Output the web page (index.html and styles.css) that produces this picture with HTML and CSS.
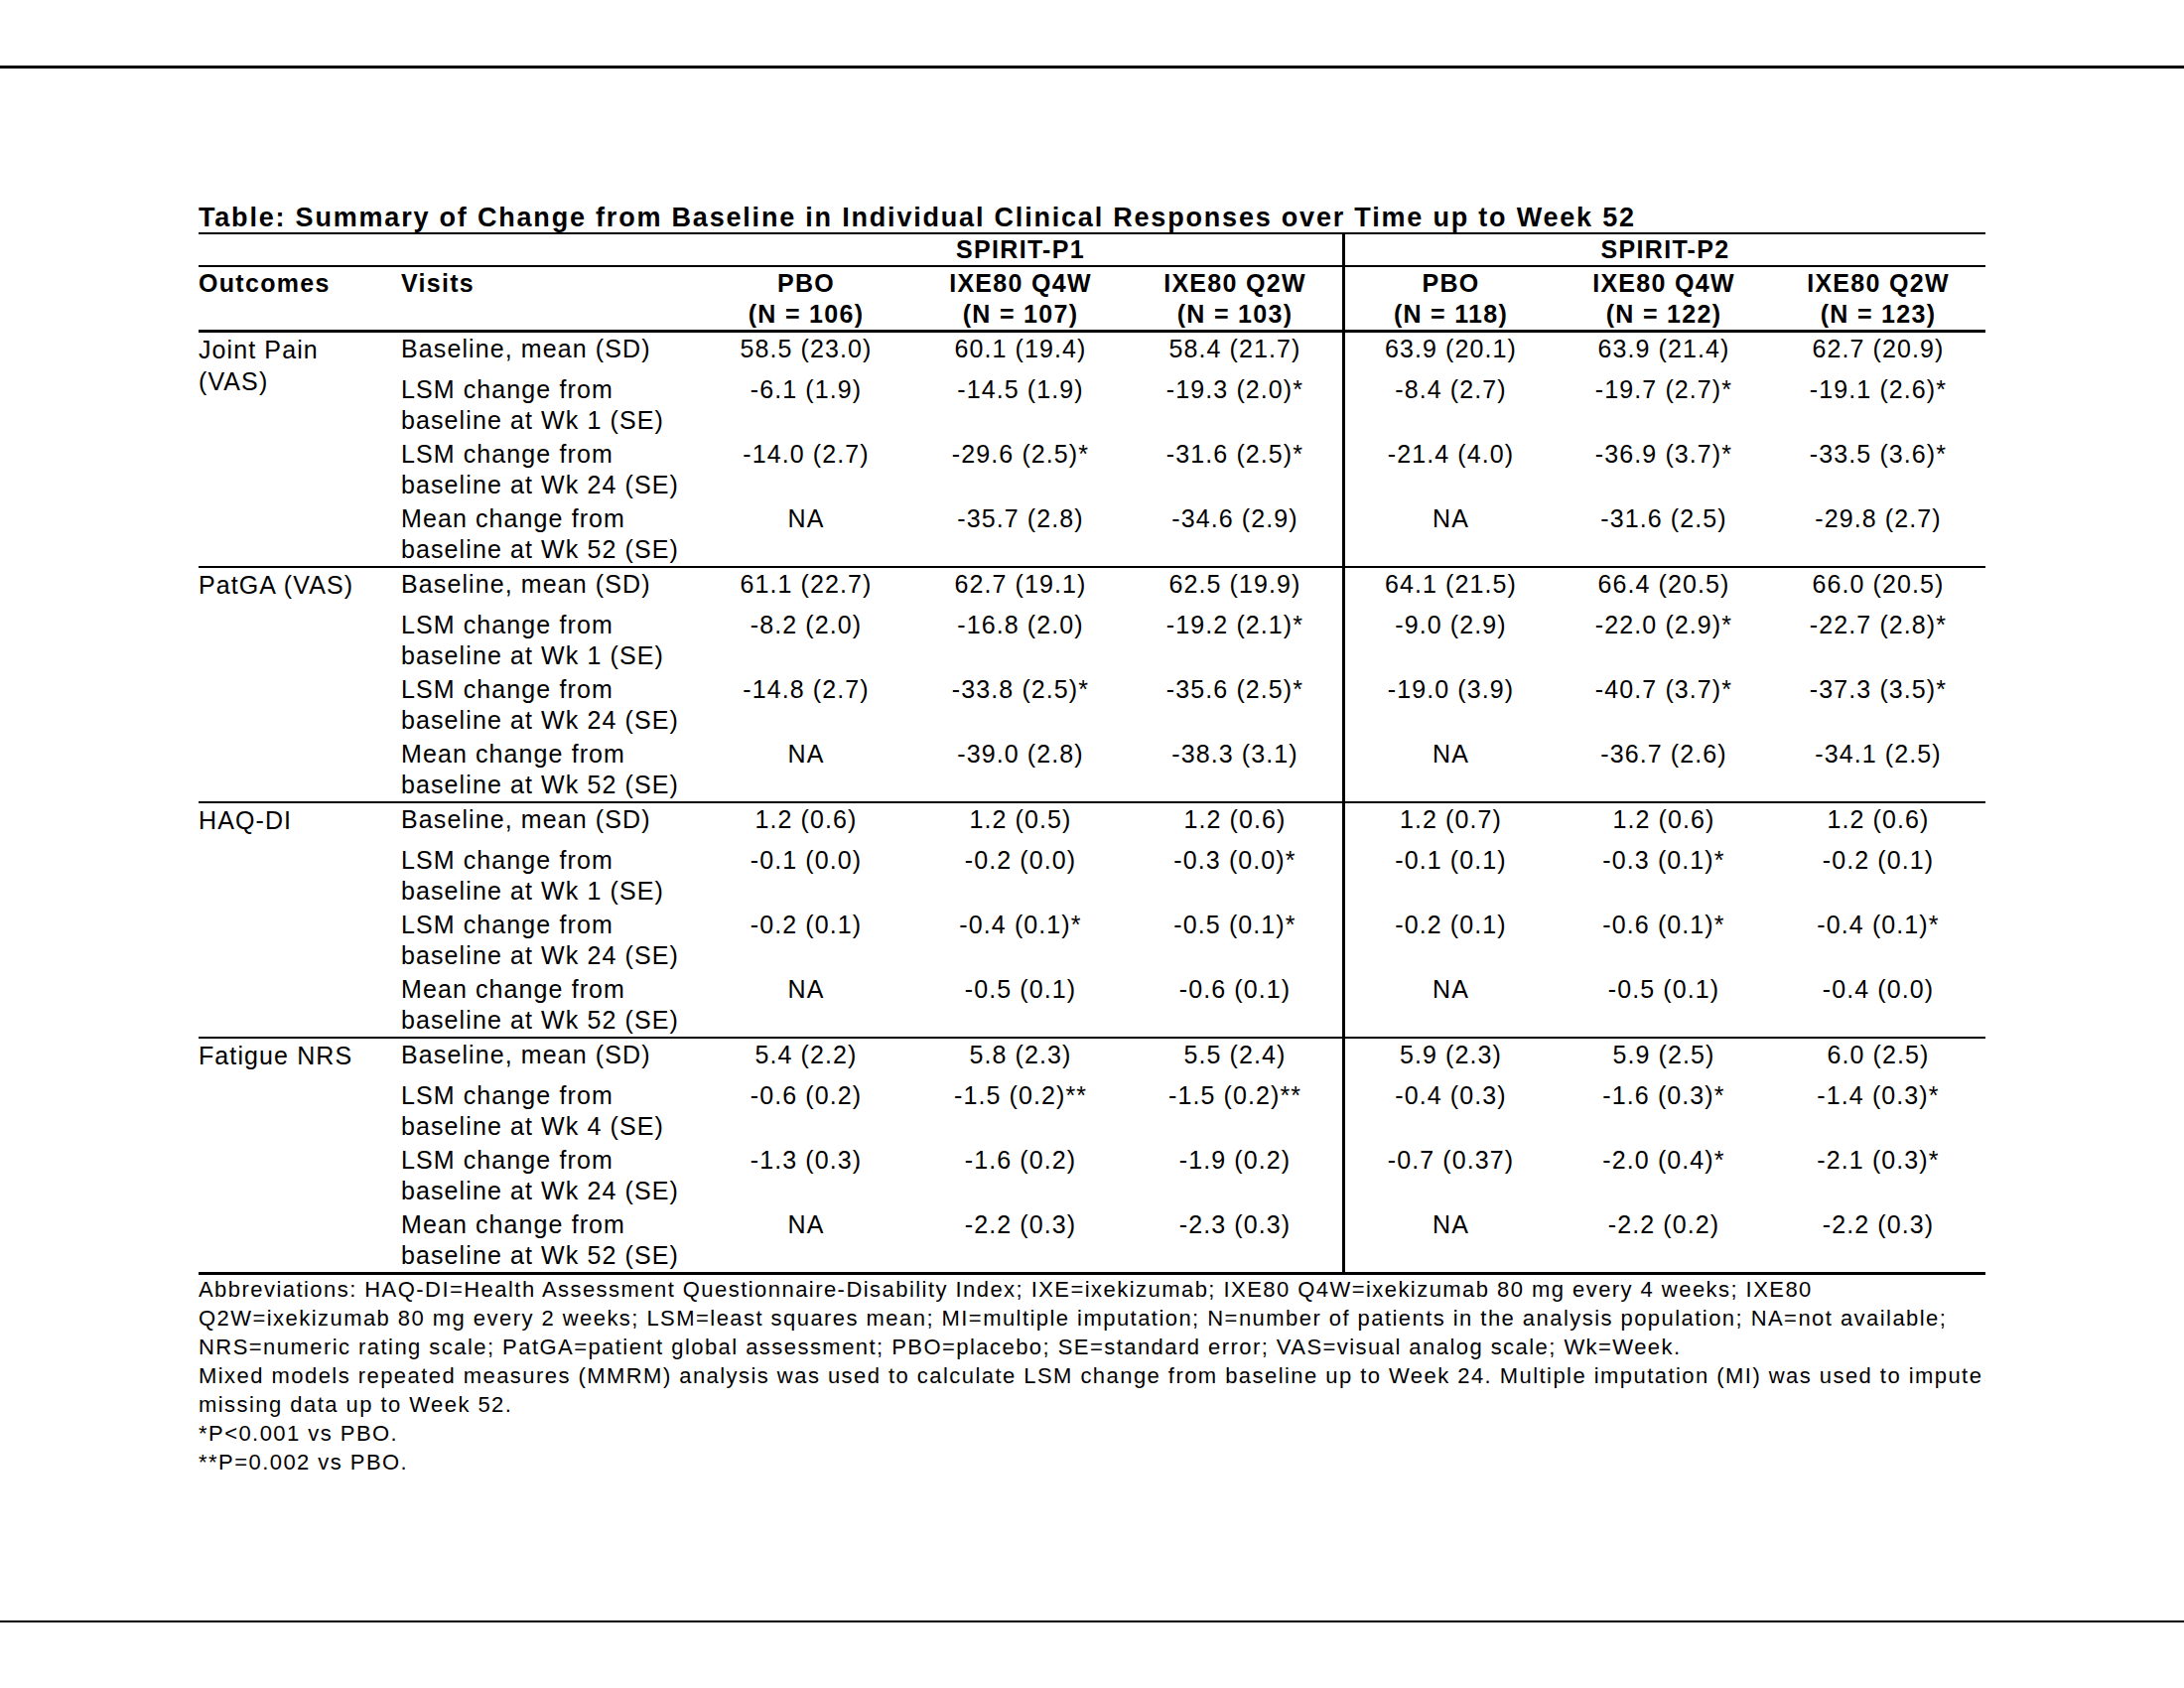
FILE: index.html
```html
<!DOCTYPE html>
<html lang="en">
<head>
<meta charset="utf-8">
<title>Summary of Change from Baseline</title>
<link rel="stylesheet" href="styles.css">
</head>
<body>
<div class="sheet">
  <div class="rule-top"></div>
  <div class="content">
    <div class="title">Table: Summary of Change from Baseline in Individual Clinical Responses over Time up to Week 52</div>
    <table class="data">
      <colgroup>
        <col class="c-out"><col class="c-vis">
        <col class="c-val"><col class="c-val"><col class="c-val">
        <col class="c-val"><col class="c-val"><col class="c-val">
      </colgroup>
      <thead>
        <tr class="study-row">
          <th></th><th></th>
          <th colspan="3">SPIRIT-P1</th>
          <th colspan="3" class="p2">SPIRIT-P2</th>
        </tr>
        <tr class="arm-row">
          <th class="left">Outcomes</th>
          <th class="left">Visits</th>
          <th>PBO<br>(N = 106)</th>
          <th>IXE80 Q4W<br>(N = 107)</th>
          <th>IXE80 Q2W<br>(N = 103)</th>
          <th class="p2">PBO<br>(N = 118)</th>
          <th>IXE80 Q4W<br>(N = 122)</th>
          <th>IXE80 Q2W<br>(N = 123)</th>
        </tr>
      </thead>
      <tbody class="group">
        <tr class="first">
          <td class="outcome" rowspan="4">Joint Pain<br>(VAS)</td>
          <td class="visit">Baseline, mean (SD)</td>
          <td>58.5 (23.0)</td><td>60.1 (19.4)</td><td>58.4 (21.7)</td>
          <td class="p2">63.9 (20.1)</td><td>63.9 (21.4)</td><td>62.7 (20.9)</td>
        </tr>
        <tr>
          <td class="visit">LSM change from<br>baseline at Wk 1 (SE)</td>
          <td>-6.1 (1.9)</td><td>-14.5 (1.9)</td><td>-19.3 (2.0)*</td>
          <td class="p2">-8.4 (2.7)</td><td>-19.7 (2.7)*</td><td>-19.1 (2.6)*</td>
        </tr>
        <tr>
          <td class="visit">LSM change from<br>baseline at Wk 24 (SE)</td>
          <td>-14.0 (2.7)</td><td>-29.6 (2.5)*</td><td>-31.6 (2.5)*</td>
          <td class="p2">-21.4 (4.0)</td><td>-36.9 (3.7)*</td><td>-33.5 (3.6)*</td>
        </tr>
        <tr class="last">
          <td class="visit">Mean change from<br>baseline at Wk 52 (SE)</td>
          <td>NA</td><td>-35.7 (2.8)</td><td>-34.6 (2.9)</td>
          <td class="p2">NA</td><td>-31.6 (2.5)</td><td>-29.8 (2.7)</td>
        </tr>
      </tbody>
      <tbody class="group">
        <tr class="first">
          <td class="outcome" rowspan="4">PatGA (VAS)</td>
          <td class="visit">Baseline, mean (SD)</td>
          <td>61.1 (22.7)</td><td>62.7 (19.1)</td><td>62.5 (19.9)</td>
          <td class="p2">64.1 (21.5)</td><td>66.4 (20.5)</td><td>66.0 (20.5)</td>
        </tr>
        <tr>
          <td class="visit">LSM change from<br>baseline at Wk 1 (SE)</td>
          <td>-8.2 (2.0)</td><td>-16.8 (2.0)</td><td>-19.2 (2.1)*</td>
          <td class="p2">-9.0 (2.9)</td><td>-22.0 (2.9)*</td><td>-22.7 (2.8)*</td>
        </tr>
        <tr>
          <td class="visit">LSM change from<br>baseline at Wk 24 (SE)</td>
          <td>-14.8 (2.7)</td><td>-33.8 (2.5)*</td><td>-35.6 (2.5)*</td>
          <td class="p2">-19.0 (3.9)</td><td>-40.7 (3.7)*</td><td>-37.3 (3.5)*</td>
        </tr>
        <tr class="last">
          <td class="visit">Mean change from<br>baseline at Wk 52 (SE)</td>
          <td>NA</td><td>-39.0 (2.8)</td><td>-38.3 (3.1)</td>
          <td class="p2">NA</td><td>-36.7 (2.6)</td><td>-34.1 (2.5)</td>
        </tr>
      </tbody>
      <tbody class="group">
        <tr class="first">
          <td class="outcome" rowspan="4">HAQ-DI</td>
          <td class="visit">Baseline, mean (SD)</td>
          <td>1.2 (0.6)</td><td>1.2 (0.5)</td><td>1.2 (0.6)</td>
          <td class="p2">1.2 (0.7)</td><td>1.2 (0.6)</td><td>1.2 (0.6)</td>
        </tr>
        <tr>
          <td class="visit">LSM change from<br>baseline at Wk 1 (SE)</td>
          <td>-0.1 (0.0)</td><td>-0.2 (0.0)</td><td>-0.3 (0.0)*</td>
          <td class="p2">-0.1 (0.1)</td><td>-0.3 (0.1)*</td><td>-0.2 (0.1)</td>
        </tr>
        <tr>
          <td class="visit">LSM change from<br>baseline at Wk 24 (SE)</td>
          <td>-0.2 (0.1)</td><td>-0.4 (0.1)*</td><td>-0.5 (0.1)*</td>
          <td class="p2">-0.2 (0.1)</td><td>-0.6 (0.1)*</td><td>-0.4 (0.1)*</td>
        </tr>
        <tr class="last">
          <td class="visit">Mean change from<br>baseline at Wk 52 (SE)</td>
          <td>NA</td><td>-0.5 (0.1)</td><td>-0.6 (0.1)</td>
          <td class="p2">NA</td><td>-0.5 (0.1)</td><td>-0.4 (0.0)</td>
        </tr>
      </tbody>
      <tbody class="group final">
        <tr class="first">
          <td class="outcome" rowspan="4">Fatigue NRS</td>
          <td class="visit">Baseline, mean (SD)</td>
          <td>5.4 (2.2)</td><td>5.8 (2.3)</td><td>5.5 (2.4)</td>
          <td class="p2">5.9 (2.3)</td><td>5.9 (2.5)</td><td>6.0 (2.5)</td>
        </tr>
        <tr>
          <td class="visit">LSM change from<br>baseline at Wk 4 (SE)</td>
          <td>-0.6 (0.2)</td><td>-1.5 (0.2)**</td><td>-1.5 (0.2)**</td>
          <td class="p2">-0.4 (0.3)</td><td>-1.6 (0.3)*</td><td>-1.4 (0.3)*</td>
        </tr>
        <tr>
          <td class="visit">LSM change from<br>baseline at Wk 24 (SE)</td>
          <td>-1.3 (0.3)</td><td>-1.6 (0.2)</td><td>-1.9 (0.2)</td>
          <td class="p2">-0.7 (0.37)</td><td>-2.0 (0.4)*</td><td>-2.1 (0.3)*</td>
        </tr>
        <tr class="last">
          <td class="visit">Mean change from<br>baseline at Wk 52 (SE)</td>
          <td>NA</td><td>-2.2 (0.3)</td><td>-2.3 (0.3)</td>
          <td class="p2">NA</td><td>-2.2 (0.2)</td><td>-2.2 (0.3)</td>
        </tr>
      </tbody>
    </table>
    <div class="notes">
      <p>Abbreviations: HAQ-DI=Health Assessment Questionnaire-Disability Index; IXE=ixekizumab; IXE80 Q4W=ixekizumab 80 mg every 4 weeks; IXE80<br>Q2W=ixekizumab 80 mg every 2 weeks; LSM=least squares mean; MI=multiple imputation; N=number of patients in the analysis population; NA=not available;<br>NRS=numeric rating scale; PatGA=patient global assessment; PBO=placebo; SE=standard error; VAS=visual analog scale; Wk=Week.</p>
      <p>Mixed models repeated measures (MMRM) analysis was used to calculate LSM change from baseline up to Week 24. Multiple imputation (MI) was used to impute<br>missing data up to Week 52.</p>
      <p>*P&lt;0.001 vs PBO.</p>
      <p>**P=0.002 vs PBO.</p>
    </div>
  </div>
  <div class="rule-bottom"></div>
</div>
</body>
</html>
```

FILE: styles.css
```css
html, body {
  margin: 0;
  padding: 0;
  background: #ffffff;
}

body {
  font-family: "Liberation Sans", Arial, Helvetica, sans-serif;
  color: #000000;
}

.sheet {
  height: 1700px;
  display: flex;
  flex-direction: column;
}

.rule-top {
  margin-top: 66px;
  border-top: 3px solid #000;
}

.rule-bottom {
  margin-top: auto;
  margin-bottom: 66px;
  border-top: 2px solid #000;
}

.content {
  margin: 135px 0 0 200px;
  width: 1800px;
}

.title {
  font-weight: bold;
  font-size: 27px;
  line-height: 30px;
  letter-spacing: 1.8px;
  white-space: nowrap;
}

.data {
  width: 1800px;
  table-layout: fixed;
  border-collapse: separate;
  border-spacing: 0;
  border-top: 2px solid #000;
  font-size: 25px;
  letter-spacing: 1.1px;
}

.c-out { width: 204px; }
.c-vis { width: 300px; }
.c-val { width: 216px; }

.data th,
.data td {
  padding: 0;
  vertical-align: top;
  text-align: center;
  white-space: nowrap;
}

.data th {
  font-weight: bold;
  letter-spacing: 1.3px;
  line-height: 31px;
}

.data th.left,
.data td.outcome,
.data td.visit {
  text-align: left;
}

.study-row th {
  border-bottom: 2px solid #000;
}

.arm-row th {
  padding-top: 1px;
  border-bottom: 3px solid #000;
}

.data .p2 {
  border-left: 3px solid #000;
}

.data td {
  line-height: 31px;
  padding: 1px 0 2px;
}

.data td.outcome {
  line-height: 32px;
}

.group tr.first td {
  padding-bottom: 9px;
}

.group tr.last td {
  padding-bottom: 1px;
}

.group tr.last td,
.group td.outcome {
  border-bottom: 2px solid #000;
}

.group.final tr.last td,
.group.final td.outcome {
  border-bottom: 3px solid #000;
}

.group td.outcome {
  padding-bottom: 0;
}

.notes {
  font-size: 22px;
  line-height: 29px;
  letter-spacing: 1.45px;
  white-space: nowrap;
}

.notes p {
  margin: 0;
}
```
